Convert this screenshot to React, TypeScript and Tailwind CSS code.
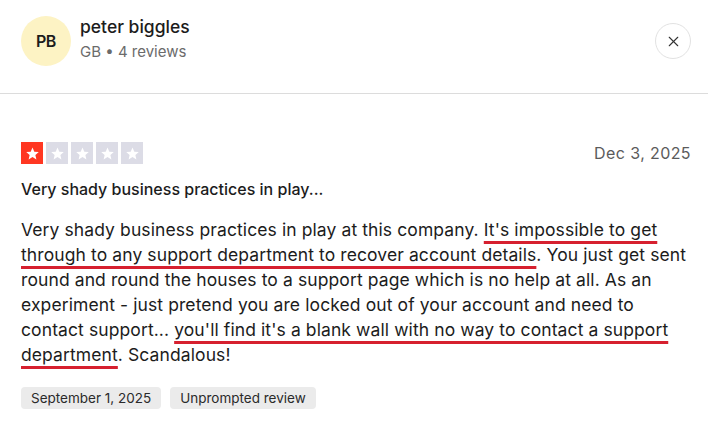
import React from 'react'
import { X } from 'lucide-react'

const Star = ({ on }: { on: boolean }) => (
  <div className={`w-[22px] h-[22px] flex items-center justify-center ${on ? 'bg-[#ff3722]' : 'bg-[#dcdce6]'}`}>
    <svg viewBox="0 0 24 24" className="w-[15px] h-[15px]" fill="#fff">
      <path d="M12 2.5l2.9 6.6 7.1.6-5.4 4.7 1.6 7-6.2-3.7-6.2 3.7 1.6-7L2 9.7l7.1-.6z" />
    </svg>
  </div>
)

const Mark = ({ children }: { children: React.ReactNode }) => (
  <span className="underline decoration-[#d6202f] decoration-[3px] underline-offset-[5px]">{children}</span>
)

export default function App() {
  return (
    <div className="w-[708px] h-[425px] bg-white text-[#1c1c1c] font-['Inter',sans-serif] overflow-hidden">
      {/* header */}
      <div className="flex items-center justify-between pl-[21px] pr-[17px] pt-[16px] pb-[27px] border-b border-[#dcdcdc]">
        <div className="flex items-center gap-[9px]">
          <div className="w-[50px] h-[50px] rounded-full bg-[#fdf3c4] flex items-center justify-center text-[16px] font-semibold tracking-tight">
            PB
          </div>
          <div className="flex flex-col">
            <span className="text-[17.5px] font-medium leading-[24px] -mt-[4px]">peter biggles</span>
            <span className="text-[15px] text-[#6b6b6b] leading-[22px] mt-[2px]">GB • 4 reviews</span>
          </div>
        </div>
        <button className="w-[36px] h-[36px] rounded-full border border-[#e2e2e2] flex items-center justify-center">
          <X className="w-[17px] h-[17px] text-[#333]" strokeWidth={1.5} />
        </button>
      </div>

      {/* review */}
      <div className="pl-[21px] pr-[17px] pt-[47px]">
        <div className="flex items-center justify-between">
          <div className="flex gap-[3px]">
            <Star on />
            <Star on={false} />
            <Star on={false} />
            <Star on={false} />
            <Star on={false} />
          </div>
          <span className="text-[16px] text-[#5b5b5b] tracking-[0.4px]">Dec 3, 2025</span>
        </div>
        <h2 className="mt-[13px] text-[16px] font-medium leading-[22px]">Very shady business practices in play...</h2>
        <p className="mt-[17px] text-[17.5px] leading-[25px] tracking-[0.1px] whitespace-nowrap">
          Very shady business practices in play at this company. <Mark>It's impossible to get </Mark>
          <br />
          <Mark>through to any support department to recover account details</Mark>. You just get sent
          <br />
          round and round the houses to a support page which is no help at all. As an
          <br />
          experiment - just pretend you are locked out of your account and need to
          <br />
          contact support... <Mark>you'll find it's a blank wall with no way to contact a support </Mark>
          <br />
          <Mark>department</Mark>. Scandalous!
        </p>
        <div className="flex gap-[9px] mt-[20px]">
          <span className="bg-[#ebebeb] rounded-[4px] px-[10px] h-[22px] flex items-center text-[13.5px] text-[#2a2a2a]">September 1, 2025</span>
          <span className="bg-[#ebebeb] rounded-[4px] px-[10px] h-[22px] flex items-center text-[13.5px] text-[#2a2a2a]">Unprompted review</span>
        </div>
      </div>
    </div>
  )
}
